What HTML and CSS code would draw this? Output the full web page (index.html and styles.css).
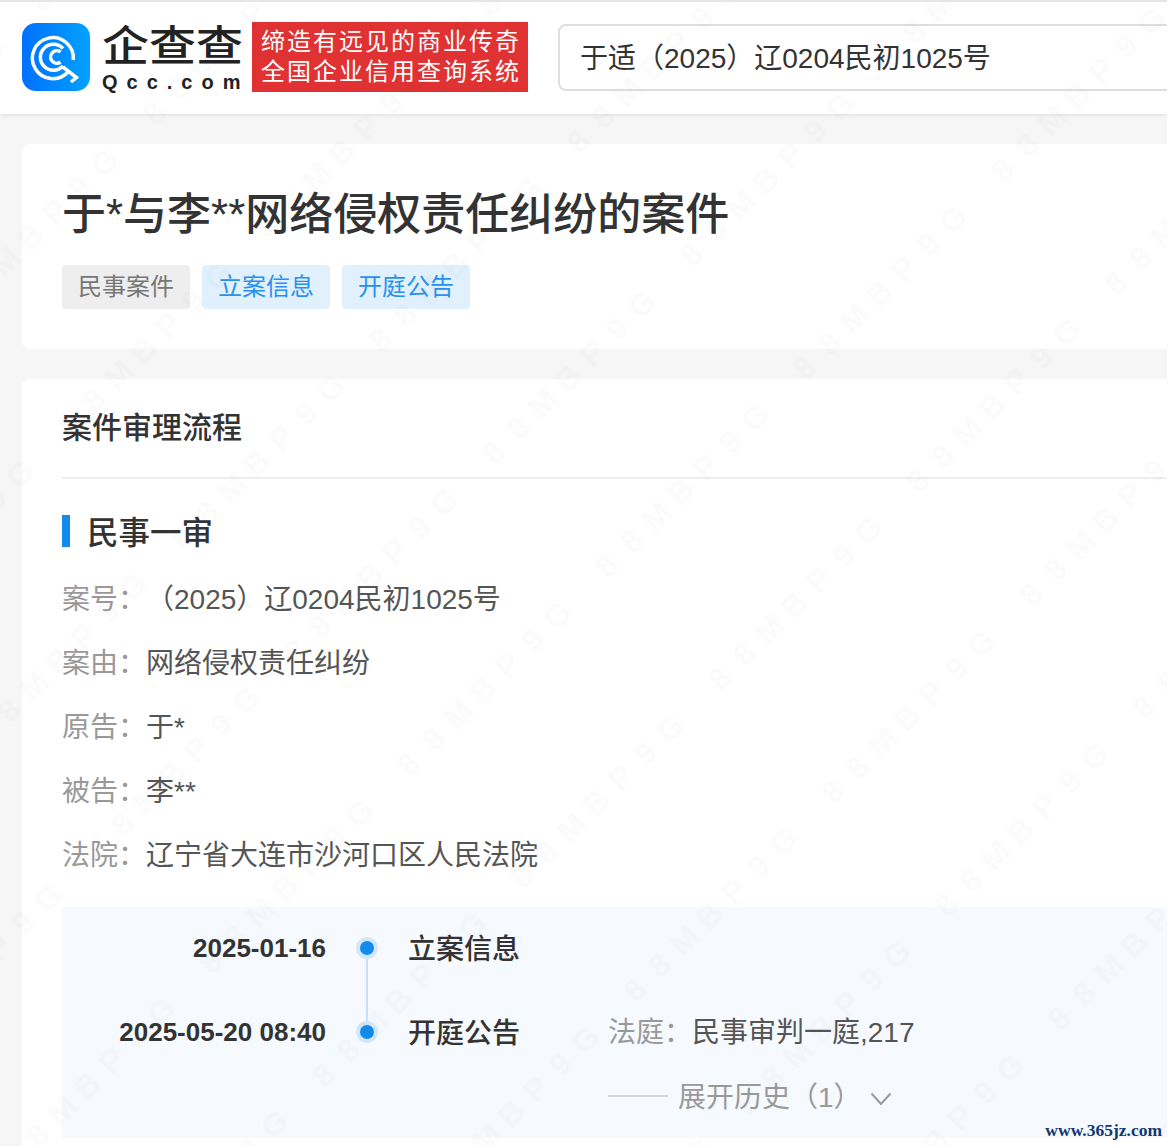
FILE: index.html
```html
<!DOCTYPE html>
<html lang="zh-CN">
<head>
<meta charset="utf-8">
<title>于*与李**网络侵权责任纠纷的案件</title>
<link rel="stylesheet" href="styles.css">
</head>
<body>
<div class="page">
  <header class="header">
    <svg class="logo-icon" width="68" height="68" viewBox="0 0 68 68" fill="none">
      <defs>
        <linearGradient id="logoGrad" x1="0" y1="0" x2="1" y2="0">
          <stop offset="0" stop-color="#0070ff"/>
          <stop offset="1" stop-color="#00a2ff"/>
        </linearGradient>
      </defs>
      <rect width="68" height="68" rx="14" fill="url(#logoGrad)"/>
      <g stroke="#fff" stroke-width="3.5" stroke-linecap="butt">
        <path d="M46 49A20.5 20.5 0 1 1 51.3 37"/>
        <path d="M41 43A13 13 0 1 1 41 25.5"/>
        <path d="M38.5 29A6.2 6.2 0 1 0 38.5 39"/>
        <path d="M41 44L54.5 54.5L49 59"/>
      </g>
    </svg>
    <div class="wordmark">
      <span class="wordmark-cn">企查查</span>
      <span class="wordmark-en">Qcc.com</span>
    </div>
    <div class="slogan">
      <span>缔造有远见的商业传奇</span>
      <span>全国企业信用查询系统</span>
    </div>
    <div class="search">于适（2025）辽0204民初1025号</div>
  </header>

  <main class="content">
    <section class="card card-title">
      <h1 class="case-title">于*与李**网络侵权责任纠纷的案件</h1>
      <div class="tags">
        <span class="tag tag-grey">民事案件</span>
        <span class="tag tag-blue">立案信息</span>
        <span class="tag tag-blue">开庭公告</span>
      </div>
    </section>

    <section class="card card-flow">
      <h2 class="flow-heading">案件审理流程</h2>
      <h3 class="stage">民事一审</h3>
      <dl class="facts">
        <div class="fact"><dt>案号：</dt><dd>（2025）辽0204民初1025号</dd></div>
        <div class="fact"><dt>案由：</dt><dd>网络侵权责任纠纷</dd></div>
        <div class="fact"><dt>原告：</dt><dd>于*</dd></div>
        <div class="fact"><dt>被告：</dt><dd>李**</dd></div>
        <div class="fact"><dt>法院：</dt><dd>辽宁省大连市沙河口区人民法院</dd></div>
      </dl>
      <div class="timeline">
        <div class="tl-row">
          <span class="tl-date">2025-01-16</span>
          <span class="tl-node tl-node-first"><i class="tl-dot"></i></span>
          <span class="tl-name">立案信息</span>
        </div>
        <div class="tl-row">
          <span class="tl-date">2025-05-20 08:40</span>
          <span class="tl-node"><i class="tl-dot"></i></span>
          <span class="tl-name">开庭公告</span>
          <span class="tl-detail"><span class="tl-key">法庭：</span>民事审判一庭,217</span>
        </div>
        <div class="history">
          <span class="history-line"></span>
          <span class="history-text">展开历史（1）</span>
          <svg class="history-chevron" width="22" height="14" viewBox="0 0 22 14" fill="none">
            <path d="M1.5 1.5L11 12L20.5 1.5" stroke="#999" stroke-width="2"/>
          </svg>
        </div>
      </div>
    </section>
  </main>

  <svg class="watermark" width="1167" height="1146">
    <defs>
      <pattern id="wm" patternUnits="userSpaceOnUse" width="280" height="160" patternTransform="rotate(-45)">
        <text class="watermark-text" y="40" x="29 64 99 134 169 204 239">88MBP9G</text>
      </pattern>
    </defs>
    <rect width="1167" height="1146" fill="url(#wm)"/>
  </svg>
  <span class="credit">www.365jz.com</span>
</div>
</body>
</html>
```

FILE: styles.css
```css
* { box-sizing: border-box; }

html, body {
  margin: 0;
  padding: 0;
  background: #fff;
}

body {
  font-family: "Liberation Sans", "Noto Sans CJK SC", sans-serif;
  color: #333;
}

.page {
  position: relative;
  width: 1167px;
  height: 1146px;
  overflow: hidden;
  background: #f6f6f6;
  border-top: 2px solid #e6e6e6;
}

.header {
  display: flex;
  align-items: center;
  height: 112px;
  padding-left: 22px;
  background: #fff;
  box-shadow: 0 1px 4px rgba(0, 0, 0, 0.1);
}

.logo-icon {
  flex: none;
  margin: 0 12px 2px 0;
}

.wordmark {
  flex: none;
  display: flex;
  flex-direction: column;
  width: 141px;
  margin-right: 9px;
  color: #222;
}

.wordmark-cn {
  font-size: 47px;
  line-height: 48px;
  font-weight: 500;
  white-space: nowrap;
  transform: scaleY(0.9);
}

.wordmark-en {
  font-size: 20px;
  line-height: 22px;
  font-weight: 700;
  letter-spacing: 9px;
  white-space: nowrap;
}

.slogan {
  flex: none;
  display: flex;
  flex-direction: column;
  justify-content: center;
  width: 276px;
  height: 70px;
  margin-bottom: 2px;
  padding-left: 9px;
  background: #e03232;
  color: #fff;
  font-size: 24px;
  line-height: 30px;
  letter-spacing: 2px;
  white-space: nowrap;
}

.search {
  flex: none;
  width: 700px;
  height: 67px;
  margin: 0 0 1px 30px;
  padding-left: 20px;
  border: 2px solid #dedede;
  border-radius: 8px;
  font-size: 28px;
  line-height: 65px;
  white-space: nowrap;
}

.content {
  display: flex;
  flex-direction: column;
  gap: 30px;
  padding: 30px 0 0 22px;
}

.card {
  width: 1200px;
  padding: 0 40px;
  background: #fff;
  border-radius: 8px;
}

.card-title {
  height: 205px;
  padding-top: 43px;
}

.case-title {
  margin: 0;
  font-size: 44px;
  line-height: 56px;
  font-weight: 500;
  white-space: nowrap;
}

.tags {
  display: flex;
  gap: 12px;
  margin-top: 22px;
}

.tag {
  height: 44px;
  padding: 0 16px;
  border-radius: 4px;
  font-size: 24px;
  line-height: 44px;
}

.tag-grey {
  background: #eee;
  color: #777;
}

.tag-blue {
  background: #e0f0fd;
  color: #2a90ee;
}

.card-flow {
  padding-bottom: 60px;
}

.flow-heading {
  height: 100px;
  margin: 0;
  border-bottom: 2px solid #eee;
  font-size: 30px;
  line-height: 98px;
  font-weight: 500;
}

.stage {
  height: 32px;
  margin: 36px 0 19px;
  padding-left: 17px;
  border-left: 8px solid #128bed;
  font-size: 31.5px;
  line-height: 36px;
  font-weight: 500;
}

.facts {
  margin: 0 0 21px;
}

.fact {
  display: flex;
  height: 64px;
  padding-top: 2px;
  font-size: 28px;
  line-height: 64px;
}

.fact dt {
  flex: none;
  width: 84px;
  color: #999;
}

.fact dd {
  margin: 0;
  color: #555;
}

.timeline {
  padding-bottom: 15px;
  background: #f6faff;
}

.tl-row {
  display: grid;
  grid-template-columns: 264px 82px 200px 1fr;
  align-items: center;
  height: 82px;
  margin-bottom: 2px;
}

.tl-date {
  font-size: 26px;
  font-weight: 700;
  text-align: right;
  white-space: nowrap;
}

.tl-node {
  position: relative;
  display: flex;
  justify-content: center;
}

.tl-node-first::after {
  content: "";
  position: absolute;
  top: 22px;
  left: 40px;
  width: 2px;
  height: 62px;
  background: #c4e1fb;
}

.tl-dot {
  display: block;
  width: 22px;
  height: 22px;
  border: 4px solid #d2e7fb;
  border-radius: 50%;
  background: #128bed;
}

.tl-name {
  padding-bottom: 2px;
  font-size: 28px;
  font-weight: 500;
}

.tl-detail {
  padding-bottom: 4px;
  font-size: 28px;
  color: #555;
  white-space: nowrap;
}

.tl-key {
  color: #999;
}

.history {
  display: flex;
  align-items: center;
  height: 46px;
  margin-top: -2px;
  margin-bottom: 4px;
  padding-left: 546px;
  color: #999;
  font-size: 28px;
}

.history-line {
  width: 60px;
  height: 2px;
  margin-right: 10px;
  background: #d6d6d6;
}

.history-text {
  padding-bottom: 2px;
}

.history-chevron {
  margin: 6px 0 0 8px;
}

.watermark {
  position: absolute;
  top: -2px;
  left: 0;
  pointer-events: none;
}

.watermark-text {
  font-family: "Liberation Sans", sans-serif;
  font-size: 32px;
  font-weight: 700;
  fill: rgba(0, 0, 0, 0.015);
  text-anchor: middle;
}

.credit {
  position: absolute;
  right: 5px;
  bottom: 6px;
  color: #12376f;
  font-family: "Liberation Serif", serif;
  font-size: 17.5px;
  font-weight: 700;
  line-height: 20px;
}
```
